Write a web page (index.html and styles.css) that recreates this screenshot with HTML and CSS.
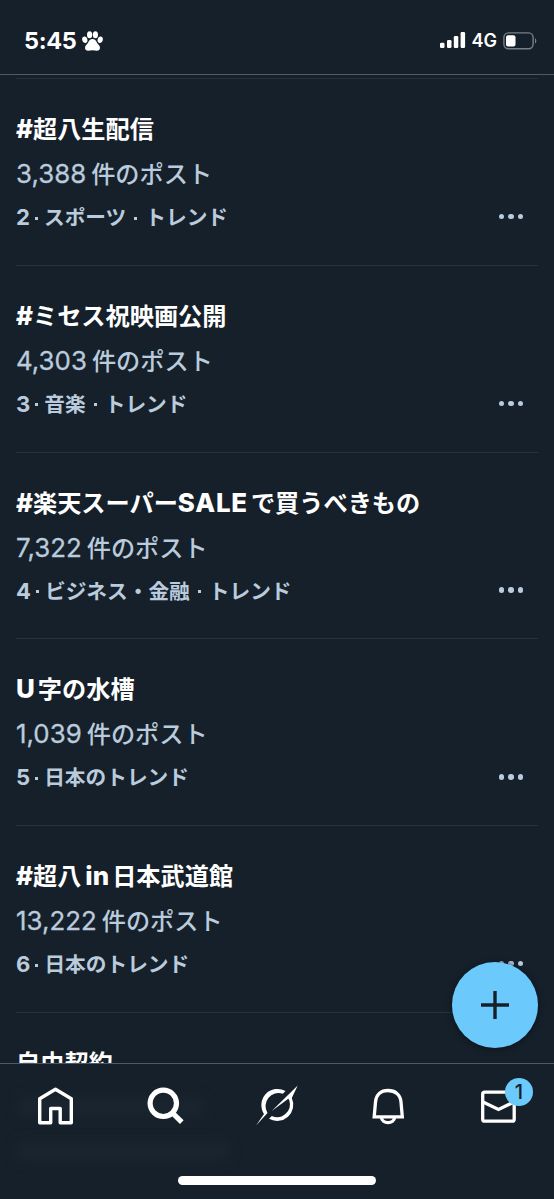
FILE: index.html
```html
<!DOCTYPE html>
<html lang="ja">
<head>
<meta charset="utf-8">
<title>トレンド</title>
<link rel="stylesheet" href="styles.css">
</head>
<body>
<div class="app">
  <header class="status">
    <div class="clock">5:45
      <svg class="paw" width="21" height="20" viewBox="0 0 21 20"><ellipse cx="2.8" cy="8.8" rx="2.6" ry="3.3" transform="rotate(-12 2.8 8.8)"/><ellipse cx="7.6" cy="3.7" rx="2.6" ry="3.5"/><ellipse cx="13.4" cy="3.7" rx="2.6" ry="3.5"/><ellipse cx="18.2" cy="8.8" rx="2.6" ry="3.3" transform="rotate(12 18.2 8.8)"/><path d="M10.5 7.900c2.200 0 3.500 1.500 4.200 3.300.7 1.700 3.300 3 3.300 5.500 0 1.900-1.300 3-3.200 3-1.500 0-2.700-.4-4.300-.4s-2.800.4-4.300.4c-1.900 0-3.200-1.100-3.200-3 0-2.500 2.600-3.800 3.300-5.500.7-1.800 2-3.300 4.200-3.300z"/></svg>
    </div>
    <div class="radio">
      <svg width="26" height="17" viewBox="0 0 26 17"><rect x="0" y="10.800" width="4.500" height="5.200" rx="1.300"/><rect x="7" y="8" width="4.500" height="8" rx="1.300"/><rect x="13.800" y="4" width="4.500" height="12" rx="1.300"/><rect x="20.600" y="0" width="4.500" height="16" rx="1.300"/></svg>
      <span class="net">4G</span>
      <svg width="35" height="18" viewBox="0 0 35 18"><rect x=".9" y=".9" width="29.200" height="15.800" rx="4.500" fill="none" stroke="#77808a" stroke-width="1.400"/><rect x="3" y="3.200" width="9.500" height="11.200" rx="2"/><path d="M32 6.200c1.800.7 1.800 4.400 0 5.200z" fill="#77808a"/></svg>
    </div>
  </header>
  <main class="trends">
    <article class="trend">
      <h2 class="title"><span class="en">#</span>超八生配信</h2>
      <p class="count"><span class="en">3,388</span>件のポスト</p>
      <div class="meta"><span><span class="en">2</span><i class="dot"></i>スポーツ<i class="dot wide"></i>トレンド</span><b class="more"><i></i><i></i><i></i></b></div>
    </article>
    <article class="trend">
      <h2 class="title"><span class="en">#</span>ミセス祝映画公開</h2>
      <p class="count"><span class="en">4,303</span>件のポスト</p>
      <div class="meta"><span><span class="en">3</span><i class="dot"></i>音楽<i class="dot wide"></i>トレンド</span><b class="more"><i></i><i></i><i></i></b></div>
    </article>
    <article class="trend">
      <h2 class="title"><span class="en">#</span>楽天スーパー<span class="en word caps">SALE</span>で買うべきもの</h2>
      <p class="count"><span class="en">7,322</span>件のポスト</p>
      <div class="meta"><span><span class="en">4</span><i class="dot"></i>ビジネス・金融<i class="dot wide"></i>トレンド</span><b class="more"><i></i><i></i><i></i></b></div>
    </article>
    <article class="trend">
      <h2 class="title"><span class="en word">U</span>字の水槽</h2>
      <p class="count"><span class="en">1,039</span>件のポスト</p>
      <div class="meta"><span><span class="en">5</span><i class="dot"></i>日本のトレンド</span><b class="more"><i></i><i></i><i></i></b></div>
    </article>
    <article class="trend">
      <h2 class="title"><span class="en">#</span>超八<span class="en word inner">in</span>日本武道館</h2>
      <p class="count"><span class="en">13,222</span>件のポスト</p>
      <div class="meta"><span><span class="en">6</span><i class="dot"></i>日本のトレンド</span><b class="more"><i></i><i></i><i></i></b></div>
    </article>
    <article class="trend last">
      <h2 class="title">自由契約</h2>
    </article>
  </main>
  <nav class="tabs">
    <i class="shade shade-count"></i><i class="shade shade-meta"></i>
    <div class="icons">
      <svg width="111" height="56" viewBox="0 0 111 56"><path d="M39.700 36.700V12.700L55.500 3.300l15.800 9.400v24H60.200V22.500h-9.500v14.200z" fill="none" stroke="#fff" stroke-width="3.400" stroke-linejoin="round"/></svg>
      <svg width="111" height="56" viewBox="0 0 111 56"><circle cx="52.300" cy="17.300" r="13.200" fill="none" stroke="#fff" stroke-width="5.200"/><path d="M61.500 27l9.300 9.200" stroke="#fff" stroke-width="5.200"/></svg>
      <svg width="111" height="56" viewBox="0 0 111 56"><path d="M34 39.500 42 28A16.200 16.200 0 0 1 63.500 5L60.800 7.800A13 13 0 0 0 45.500 27z"/><path d="M75.700-.5 69.800 12A16.200 16.200 0 0 1 47 32.800L49.800 30A13 13 0 0 0 67.300 14.200L66.300 12.800 49.700 25z"/></svg>
      <svg width="111" height="56" viewBox="0 0 111 56"><path d="M41.200 30.800 42.500 16C43 8.500 48 4.500 55 4.500S67.500 8.500 68 16l1.300 14.800zM48.300 31c.5 7.500 12.900 7.500 13.400 0" fill="none" stroke="#fff" stroke-width="3.300"/></svg>
      <span class="mail"><svg width="110" height="56" viewBox="0 0 110 56"><rect x="38.700" y="6.200" width="31.500" height="29" rx="2" fill="none" stroke="#fff" stroke-width="3.300"/><path d="M39 16l15.500 7.500L70 16" fill="none" stroke="#fff" stroke-width="3.300"/></svg><span class="badge">1</span></span>
    </div>
    <div class="homebar"></div>
  </nav>
  <button class="compose" aria-label="作成"><svg width="30" height="30" viewBox="0 0 30 30"><path d="M15 1v28M1 15h28" stroke="#16202a" stroke-width="3.400"/></svg></button>
</div>
</body>
</html>
```
FILE: styles.css
```css
* { box-sizing: border-box; margin: 0; padding: 0; }
body { background: #16202a; color: #fff; font-family: "Noto Sans CJK JP", sans-serif; }
svg { display: block; flex: none; fill: #fff; overflow: visible; }
.app { position: relative; width: 554px; height: 1199px; overflow: hidden; display: flex; flex-direction: column; }
.status { flex: none; height: 75px; border-bottom: 1px solid #4d5a69; padding: 7px 16px 0 24px; display: flex; justify-content: space-between; align-items: center; font-family: Inter, sans-serif; }
.clock { display: flex; align-items: center; gap: 5px; font-size: 23.500px; font-weight: 700; letter-spacing: -0.3px; }
.radio { display: flex; align-items: center; gap: 6px; }
.net { font-size: 18px; font-weight: 600; }
.trends { flex: 1; min-height: 0; overflow: hidden; padding: 3px 16px 0; }
.trend { height: 186.800px; padding-top: 26px; border-top: 1px solid #28323d; }
.title, .count, .meta { white-space: nowrap; }
.title { font-size: 24.200px; line-height: 45px; height: 45px; font-weight: 700; }
.count { font-size: 24.200px; line-height: 45px; height: 45px; font-weight: 500; color: #b9cbdc; }
.meta { font-size: 20.700px; line-height: 43px; height: 43px; font-weight: 700; color: #b9cbdc; display: flex; justify-content: space-between; align-items: center; padding-right: 15px; }
.en { font-family: Inter, sans-serif; font-size: 1.070em; line-height: 1; }
.title .en { font-weight: 800; }
.count .en { font-weight: 400; margin-right: 5px; -webkit-text-stroke: 0.3px #b9cbdc; }
.word { margin-right: 3px; }
.caps { letter-spacing: 0.8px; }
.inner { margin-left: 4px; }
.dot { display: inline-block; width: 3px; height: 3px; background: currentColor; vertical-align: 5.500px; margin: 0 6px 0 5px; }
.wide { margin: 0 8px 0 8px; }
.more { display: flex; gap: 4px; }
.more i { width: 5.500px; height: 5.500px; border-radius: 50%; background: #b9cbdc; }
.tabs { position: relative; flex: none; height: 136px; border-top: 1px solid #4d5a69; padding-top: 22px; }
.shade { position: absolute; left: 18px; height: 18px; background: #1a2530; filter: blur(6px); }
.shade-count { top: 34px; width: 185px; }
.shade-meta { top: 78px; width: 210px; }
.icons { position: relative; display: flex; }
.mail { position: relative; }
.badge { position: absolute; left: 61px; top: -8px; width: 28px; height: 28px; border-radius: 50%; background: #6bc9fb; color: #16202a; font: 500 20px/28px Inter, sans-serif; text-align: center; }
.homebar { width: 198px; height: 9px; margin: 34px auto 0; border-radius: 5px; background: #fff; }
.compose { position: absolute; left: 452px; top: 962px; width: 86px; height: 86px; border: 0; border-radius: 50%; background: #6bc9fb; display: flex; align-items: center; justify-content: center; box-shadow: 0 1px 6px #0c141c; }
```
